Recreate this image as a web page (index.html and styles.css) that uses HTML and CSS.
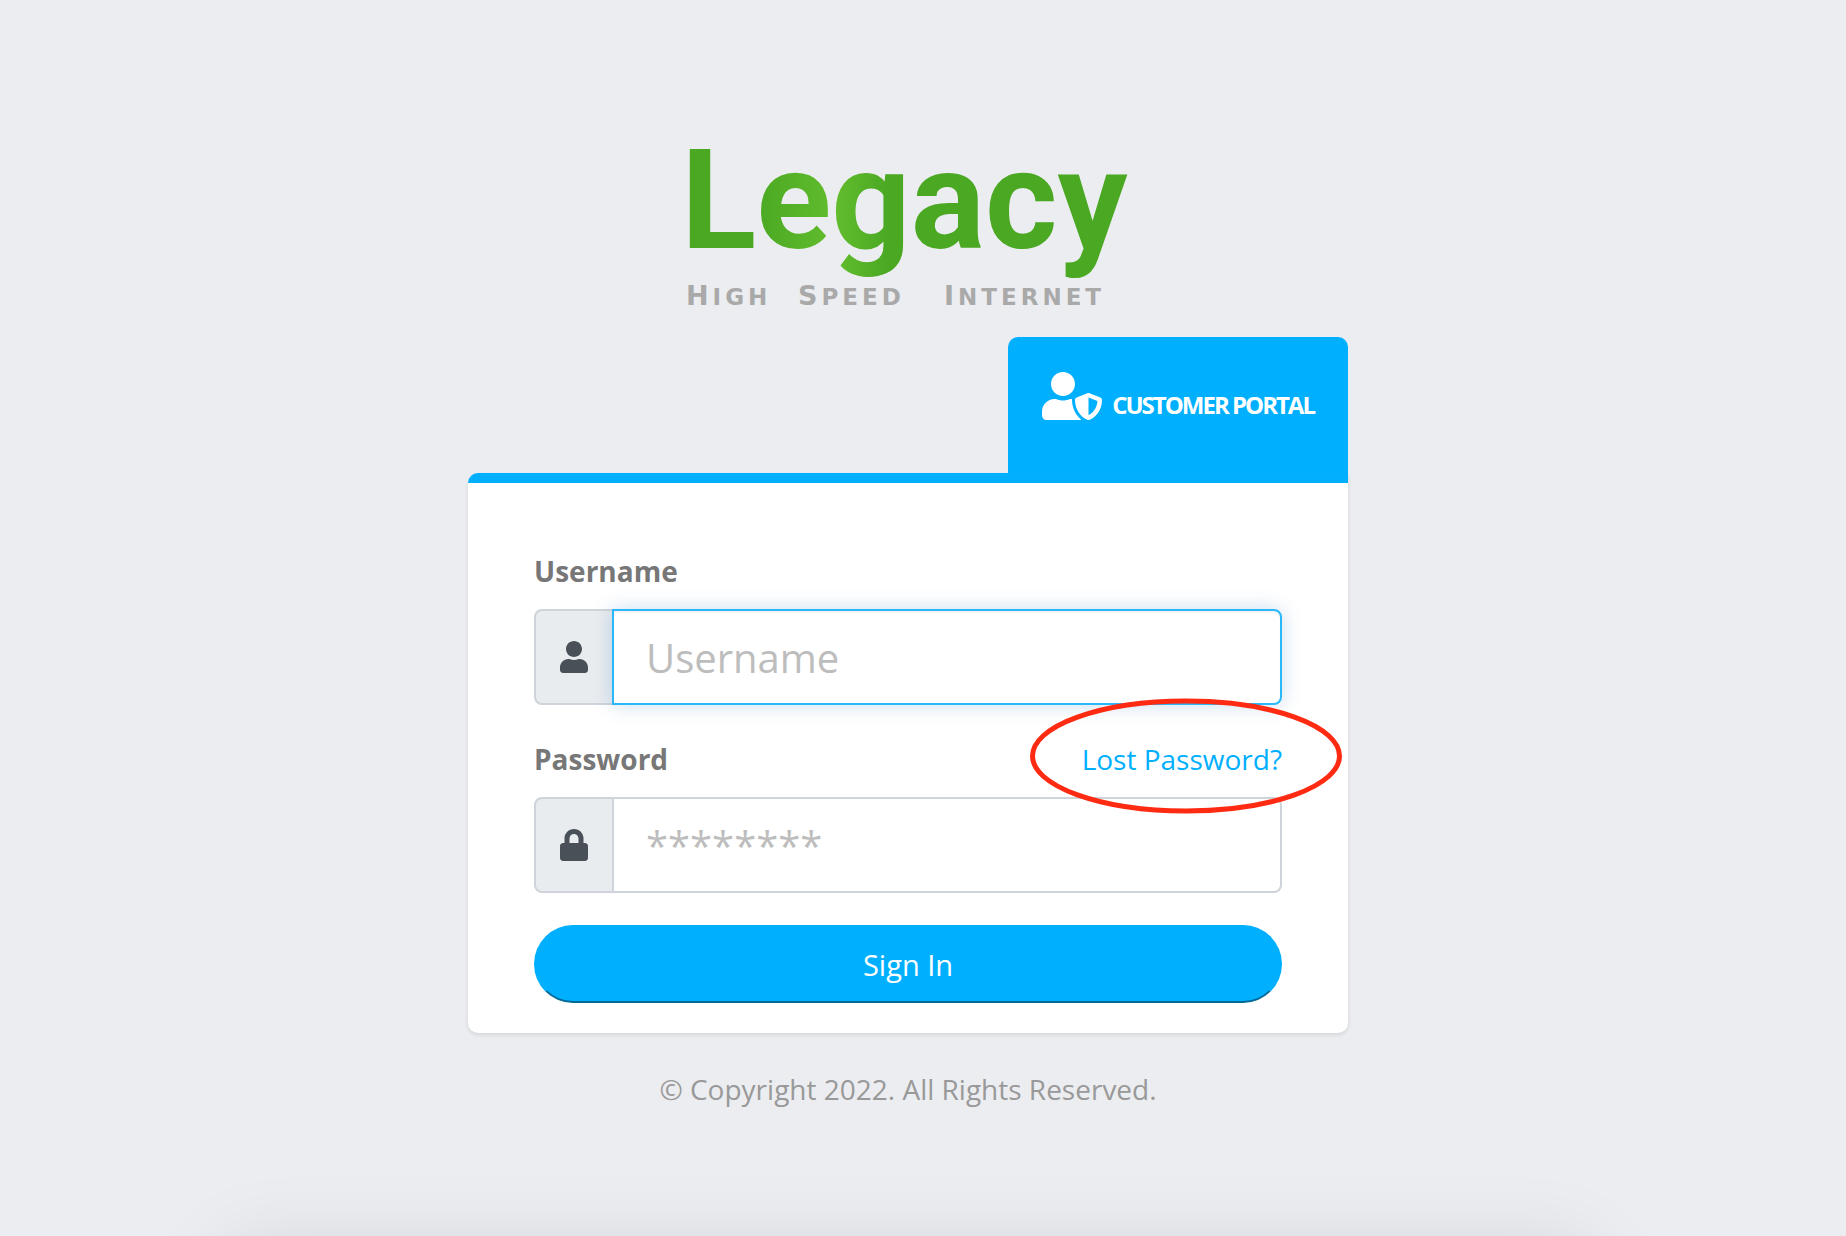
FILE: index.html
```html
<!DOCTYPE html>
<html lang="en">
<head>
	<meta charset="UTF-8">
	<meta name="viewport" content="width=device-width, initial-scale=1">
	<title>Customer Portal</title>
	<link rel="stylesheet" href="styles.css">
</head>
<body>
	<main class="sign-in">
		<svg class="logo" viewBox="0 0 440 160" role="img" aria-label="Legacy High Speed Internet">
			<defs>
				<linearGradient id="leaf" gradientUnits="userSpaceOnUse" x1="68" y1="0" x2="200" y2="0">
					<stop offset="0" stop-color="#4aa823" />
					<stop offset=".6" stop-color="#62bd2d" />
					<stop offset="1" stop-color="#4aa823" />
				</linearGradient>
			</defs>
			<text class="logo-name" x="-7" y="99" fill="url(#leaf)">Legacy</text>
			<text class="logo-line" y="156"><tspan class="cap" x="-2">H</tspan>IGH <tspan class="cap" x="110">S</tspan>PEED <tspan class="cap" x="256">I</tspan>NTERNET</text>
		</svg>

		<div class="tab">
			<svg class="tab-icon" viewBox="0 0 640 512" aria-hidden="true"><path d="M622.3 271.1l-115.2-45c-4.1-1.6-12.6-3.7-22.2 0l-115.2 45c-10.7 4.2-17.7 14-17.7 24.9 0 111.6 68.7 188.8 132.9 213.9 9.6 3.7 18 1.6 22.2 0C558.4 489.9 640 420.5 640 296c0-10.9-7-20.7-17.7-24.9zM496 462.4V273.3l95.5 37.3c-5.6 87.1-60.9 135.4-95.5 151.8zM224 256c70.7 0 128-57.3 128-128S294.7 0 224 0 96 57.3 96 128s57.3 128 128 128zm96 40c0-2.5.8-4.8 1.1-7.2-2.5-.1-4.9-.8-7.5-.8h-16.7c-22.2 10.2-46.9 16-72.9 16s-50.6-5.8-72.9-16h-16.7C60.2 288 0 348.2 0 422.4V464c0 26.5 21.5 48 48 48h352c6.8 0 13.3-1.5 19.2-4-54-42.9-99.2-116.7-99.2-212z" /></svg>
			<h1>Customer Portal</h1>
		</div>

		<form class="card">
			<div class="field">
				<div class="label-row">
					<label for="username">Username</label>
				</div>
				<div class="input-group">
					<span class="addon">
						<svg viewBox="0 0 448 512" aria-hidden="true"><path d="M224 256c70.7 0 128-57.3 128-128S294.7 0 224 0 96 57.3 96 128s57.3 128 128 128zm89.6 32h-16.7c-22.2 10.2-46.9 16-72.9 16s-50.6-5.8-72.9-16h-16.7C60.2 288 0 348.2 0 422.4V464c0 26.5 21.5 48 48 48h352c26.5 0 48-21.5 48-48v-41.6c0-74.2-60.2-134.4-134.4-134.4z" /></svg>
					</span>
					<input class="active" type="text" id="username" name="username" placeholder="Username">
				</div>
			</div>
			<div class="field">
				<div class="label-row">
					<label for="password">Password</label>
					<span class="lost">
						<a href="#lost">Lost Password?</a>
						<svg class="ring" viewBox="0 0 312 116" aria-hidden="true"><ellipse cx="156" cy="58" rx="153.5" ry="55" /></svg>
					</span>
				</div>
				<div class="input-group">
					<span class="addon">
						<svg viewBox="0 0 448 512" aria-hidden="true"><path d="M400 224h-24v-72C376 68.2 307.8 0 224 0S72 68.2 72 152v72H48c-26.5 0-48 21.5-48 48v192c0 26.5 21.5 48 48 48h352c26.5 0 48-21.5 48-48V272c0-26.5-21.5-48-48-48zm-104 0H152v-72c0-39.7 32.3-72 72-72s72 32.3 72 72v72z" /></svg>
					</span>
					<input type="password" id="password" name="password" placeholder="********">
				</div>
			</div>
			<button type="submit">Sign In</button>
		</form>

		<p class="copyright">© Copyright 2022. All Rights Reserved.</p>
	</main>
	<div class="bottom-shade"></div>
</body>
</html>
```
FILE: styles.css
```css
* {
	box-sizing: border-box;
}

body {
	margin: 0;
	padding: 149px 30px 0 0;
	background: #ecedf0;
	color: #777;
	font-family: "Open Sans", "Liberation Sans", sans-serif;
	font-size: 28px;
	line-height: 42px;
}

.sign-in {
	display: flex;
	flex-direction: column;
	max-width: 880px;
	margin: 0 auto;
}

.logo {
	align-self: center;
	width: 440px;
	height: 160px;
	margin-bottom: 28px;
	overflow: visible;
}

.logo-name {
	font-family: Roboto, sans-serif;
	font-size: 139px;
	font-weight: bold;
}

.logo-line {
	font-family: "DejaVu Sans", sans-serif;
	font-size: 23px;
	font-weight: bold;
	letter-spacing: 4px;
	fill: #a9a9a9;
}

.logo-line .cap {
	font-size: 27px;
}

.tab {
	display: flex;
	align-self: flex-end;
	align-items: flex-end;
	gap: 10px;
	padding: 35px 34px 53px 34px;
	border-radius: 10px 10px 0 0;
	background: #00b0ff;
	color: #fff;
}

.tab-icon {
	width: 60px;
	height: 48px;
	fill: #fff;
}

.tab h1 {
	margin: 0;
	font-size: 24px;
	font-weight: bold;
	letter-spacing: -2px;
	line-height: 30px;
	text-transform: uppercase;
}

.card {
	padding: 66px 66px 30px;
	border-top: 10px solid #00b0ff;
	border-radius: 10px 0 10px 10px;
	background: #fff;
	box-shadow: 0 2px 4px rgba(0, 0, 0, 0.1);
}

.field {
	margin-bottom: 32px;
}

.label-row {
	display: flex;
	justify-content: space-between;
	margin-bottom: 16px;
	line-height: 44px;
}

label {
	font-weight: bold;
}

.lost {
	position: relative;
}

.lost a {
	color: #00b0ff;
	text-decoration: none;
}

/* circled by hand, hangs over the fields around it */
.ring {
	position: absolute;
	top: -39px;
	right: -60px;
	width: 312px;
	height: 116px;
	fill: none;
	stroke: #ff2a12;
	stroke-width: 5px;
	pointer-events: none;
	z-index: 2;
}

.input-group {
	display: flex;
	height: 96px;
}

.addon {
	display: flex;
	align-items: center;
	justify-content: center;
	width: 80px;
	margin-right: -2px;
	border: 2px solid #ced4da;
	border-radius: 8px 0 0 8px;
	background: #e9ecef;
}

.addon svg {
	width: 28px;
	height: 32px;
	fill: #495057;
}

input {
	flex: 1;
	min-width: 0;
	padding: 0 32px;
	border: 2px solid #ced4da;
	border-radius: 0 8px 8px 0;
	outline: none;
	background: #fff;
	color: #495057;
	font-family: inherit;
	font-size: 40px;
}

input::placeholder {
	color: #bdbdbd;
	opacity: 1;
}

input.active,
input:focus {
	border-color: #2bb8f9;
	box-shadow: inset 0 2px 2px rgba(0, 0, 0, 0.05), 0 0 20px rgba(0, 100, 180, 0.22);
}

button {
	display: block;
	width: 100%;
	height: 78px;
	border: 2px solid #00b0ff;
	border-bottom-color: #006a99;
	border-radius: 39px;
	background: #00b0ff;
	color: #fff;
	font-family: inherit;
	font-size: 29px;
	cursor: pointer;
}

.copyright {
	margin: 35px 0 0;
	color: #999;
	text-align: center;
}

.bottom-shade {
	position: fixed;
	right: 258px;
	bottom: -110px;
	left: 228px;
	height: 100px;
	box-shadow: 0 0 80px rgba(0, 0, 0, 0.1);
}
```
